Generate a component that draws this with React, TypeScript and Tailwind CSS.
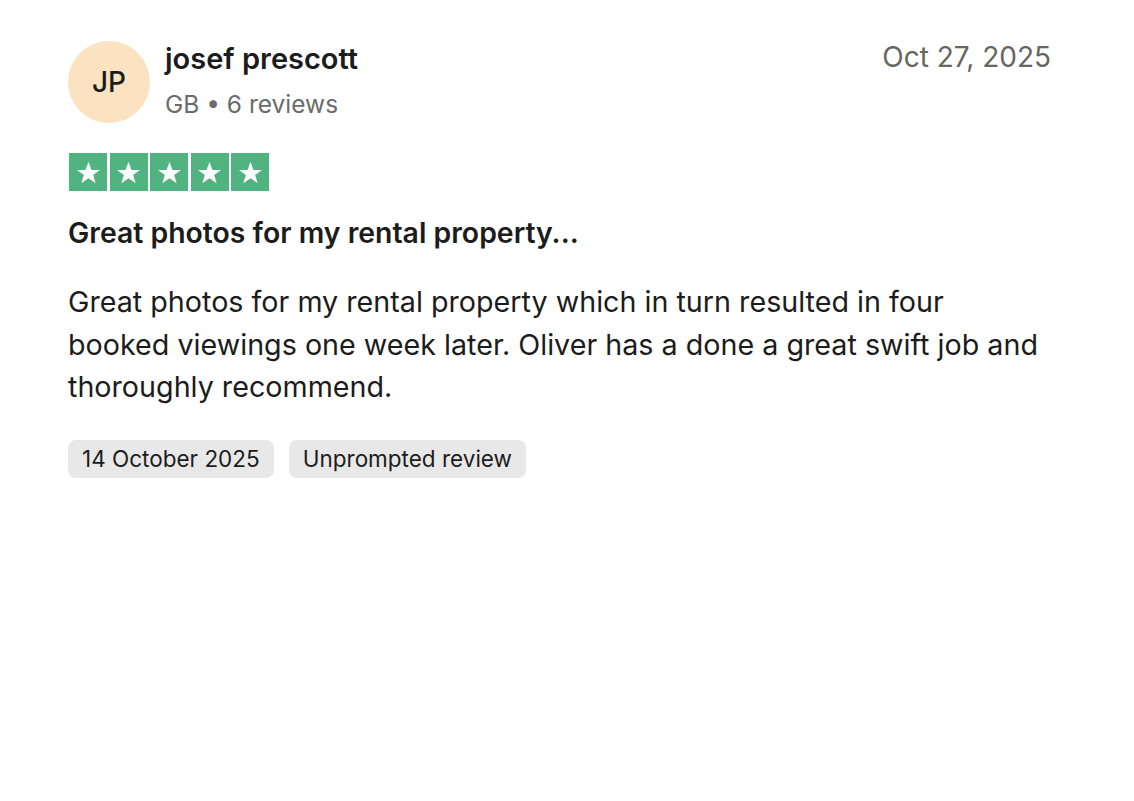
const FONT = "font-['Inter',_'Noto_Sans',_sans-serif]";

function Star() {
  return (
    <div className="flex h-[38px] w-[38px] items-center justify-center bg-[#51b37f]">
      <svg viewBox="0 0 24 24" className="h-[27px] w-[27px]" fill="white">
        <path d="M12 2.5l2.6 7.2h7.6l-6.1 4.5 2.3 7.3L12 17l-6.4 4.5 2.3-7.3-6.1-4.5h7.6z" />
      </svg>
    </div>
  );
}

export default function App() {
  return (
    <div className={`min-h-screen bg-white ${FONT} text-[#1c1c1c]`}>
      <div className="w-[1051px] pl-[68px] pt-[39px]">
        {/* Header */}
        <div className="flex items-start justify-between">
          <div className="flex items-center gap-[15px]">
            <div className="flex h-[82px] w-[82px] items-center justify-center rounded-full bg-[#fbe3c1] text-[28px] font-medium text-[#1c1c1c]">
              JP
            </div>
            <div className="flex flex-col gap-[5px]">
              <div className="text-[29px] font-semibold leading-[40px]">josef prescott</div>
              <div className="text-[24.5px] leading-[40px] text-[#6b6b6b]">GB • 6 reviews</div>
            </div>
          </div>
          <div className="text-[28px] leading-[36px] text-[#666660]">Oct 27, 2025</div>
        </div>

        {/* Stars */}
        <div className="mt-[29px] flex gap-[2.5px] pl-[1px]">
          <Star />
          <Star />
          <Star />
          <Star />
          <Star />
        </div>

        <h2 className="mt-[23px] text-[28.4px] font-semibold leading-[38px]">
          Great photos for my rental property...
        </h2>

        <p className="mt-[29px] text-[28.7px] leading-[42.5px]">
          Great photos for my rental property which in turn resulted in four booked viewings one week
          later. Oliver has a done a great swift job and thoroughly recommend.
        </p>

        <div className="mt-[31px] flex gap-[15px]">
          <span className="rounded-[8px] bg-[#e8e8e8] px-[14px] text-[22.5px] leading-[38px]">14 October 2025</span>
          <span className="rounded-[8px] bg-[#e8e8e8] px-[14px] text-[22.5px] leading-[38px]">Unprompted review</span>
        </div>
      </div>
    </div>
  );
}
